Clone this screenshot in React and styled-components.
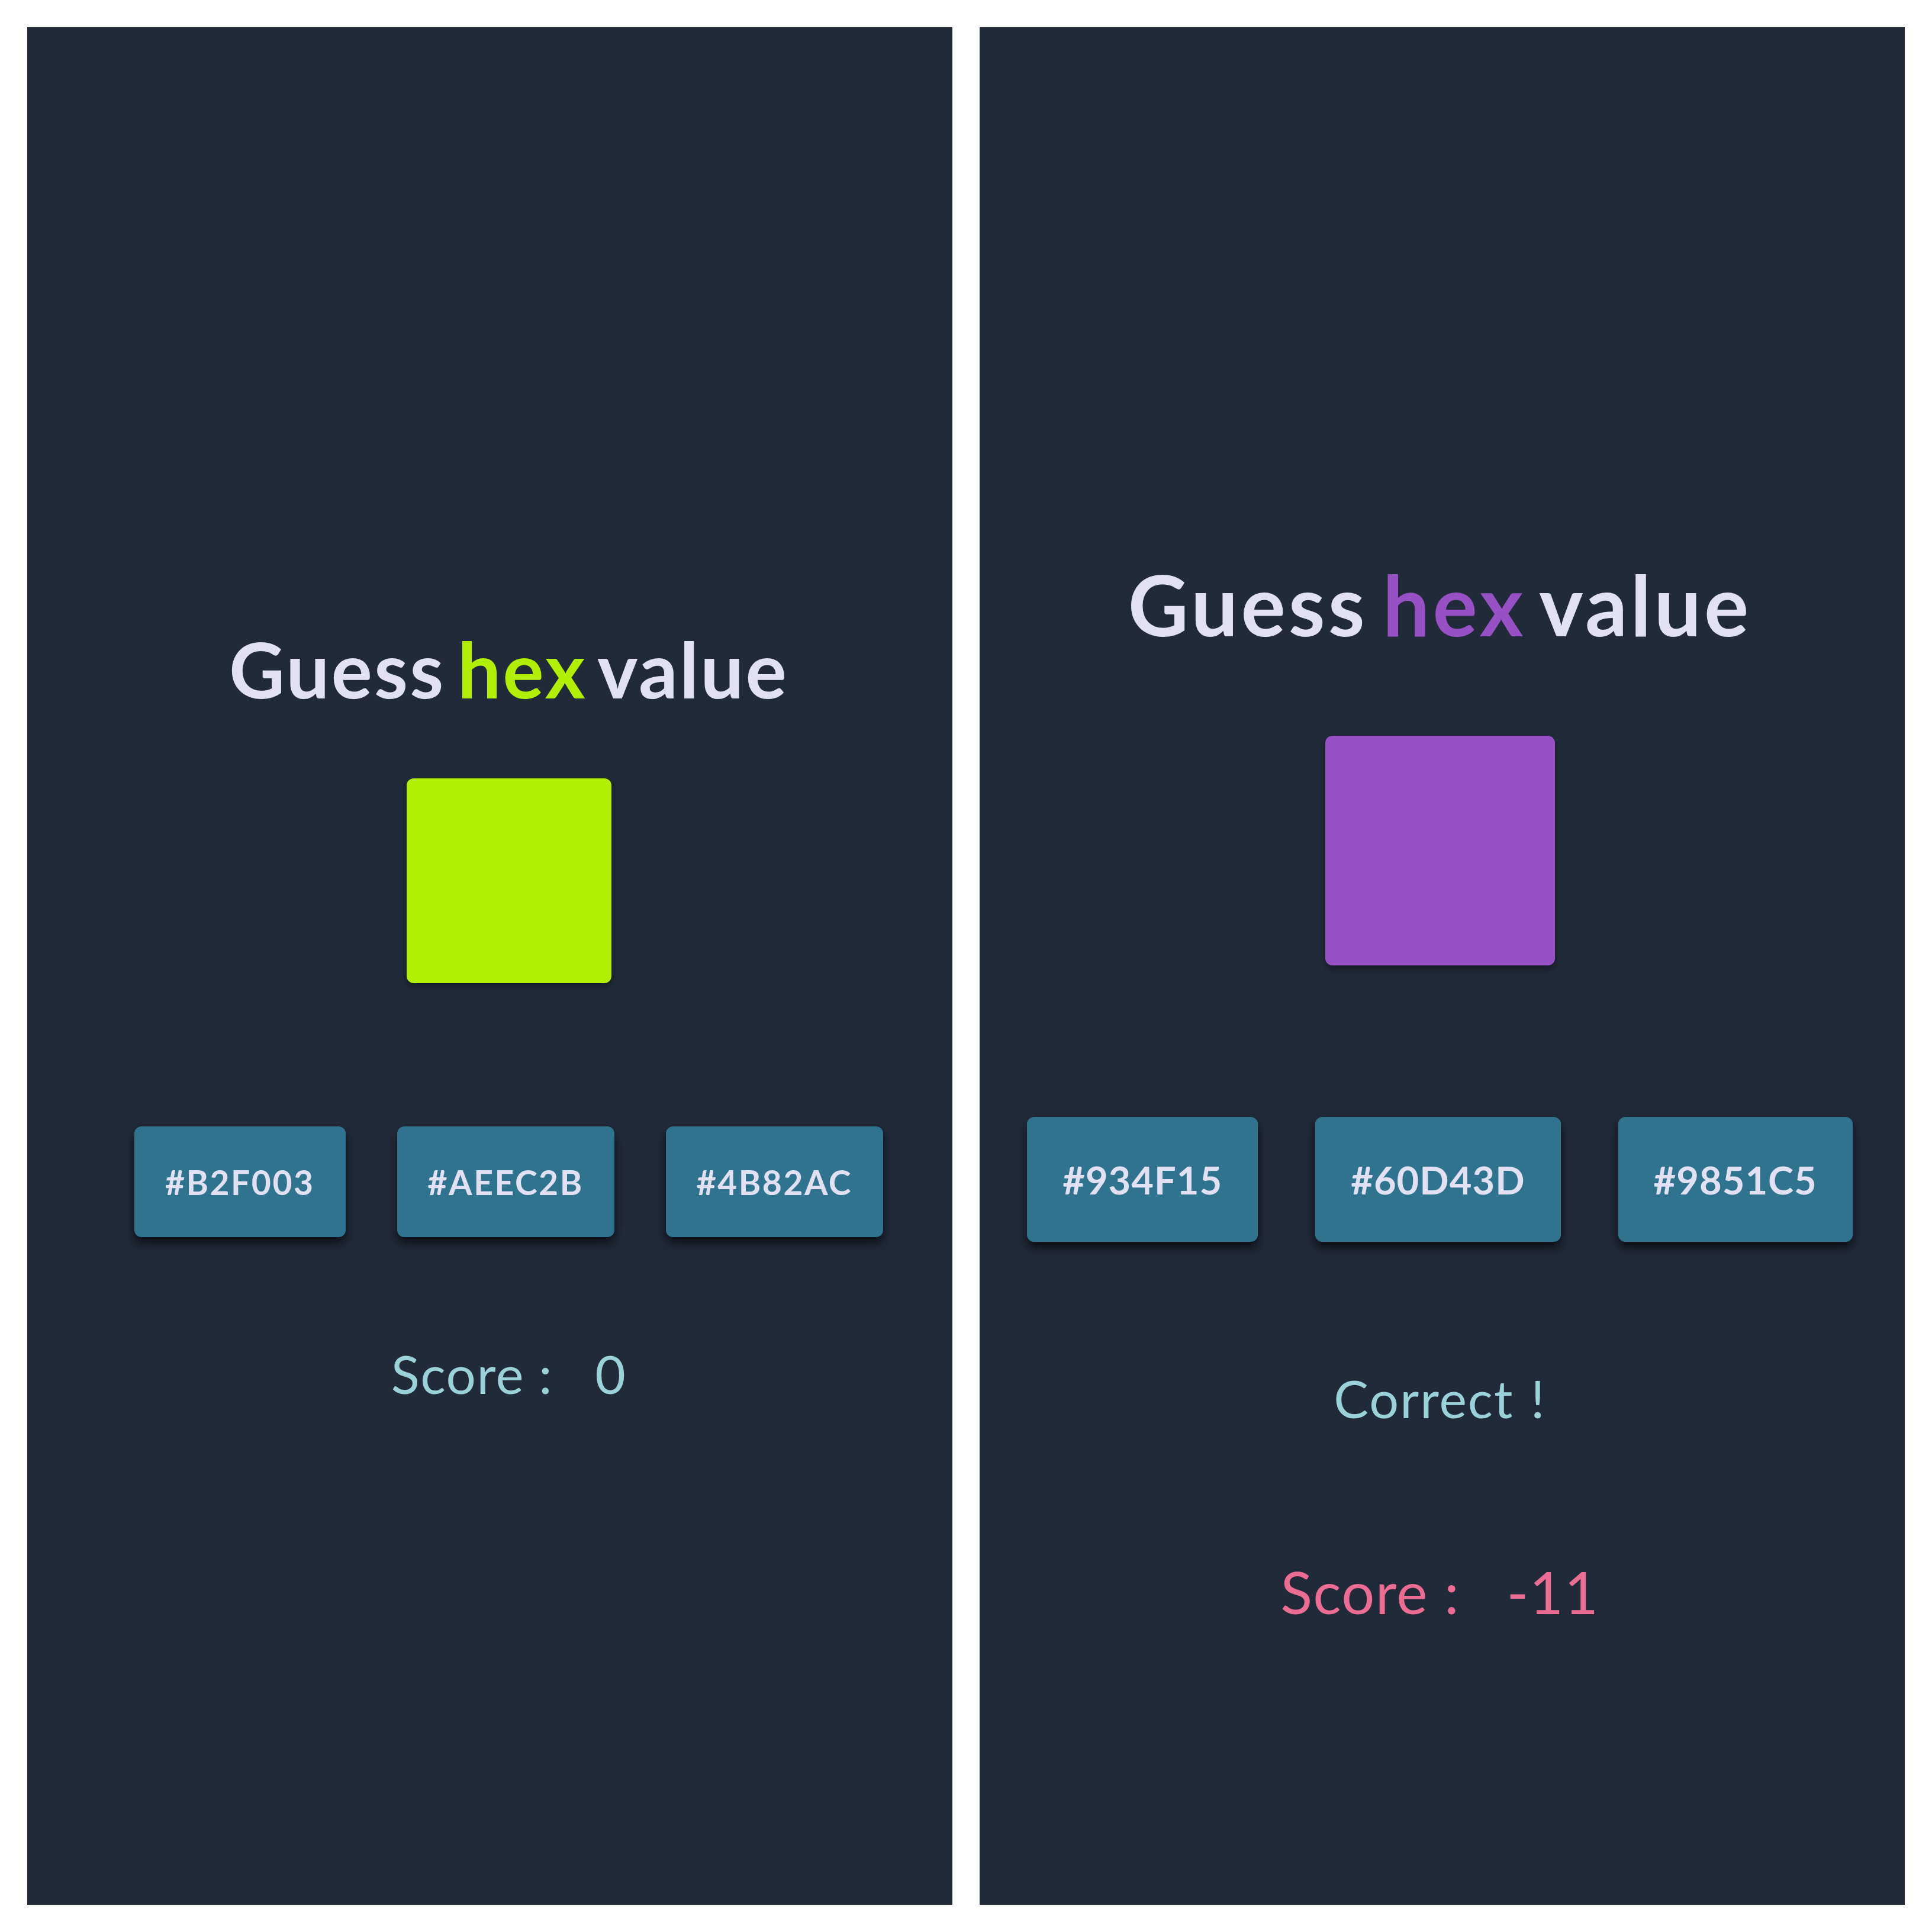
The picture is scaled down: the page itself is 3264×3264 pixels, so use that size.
import React from 'react';
import styled, { createGlobalStyle } from 'styled-components';

const GlobalStyle = createGlobalStyle`
    html, body {
        margin: 0;
        padding: 0;
        background: #ffffff;
    }
    * {
        box-sizing: border-box;
    }
`

const Page = styled.div`
    display: flex;
    gap: 46px;
    padding: 46px;
    width: 3264px;
    height: 3264px;
    background: #ffffff;
    font-family: Lato, "Noto Sans", sans-serif;
`

const Screen = styled.div`
    width: 1563px;
    height: 3172px;
    background-color: #212a39;
    display: flex;
    flex-direction: column;
    align-items: center;
    padding-top: ${p => p.$top}px;
    padding-left: ${p => p.$shift > 0 ? p.$shift * 2 : 0}px;
    padding-right: ${p => p.$shift < 0 ? -p.$shift * 2 : 0}px;
`

const Title = styled.h1`
    margin: 0;
    font-size: ${p => p.$size}px;
    line-height: 1;
    font-weight: 700;
    letter-spacing: ${p => p.$track}px;
    word-spacing: -14px;
    color: #e2e0f3;
    white-space: nowrap;
    span {
        color: ${p => p.$accent};
    }
`

const Swatch = styled.div`
    width: ${p => p.$size}px;
    height: ${p => p.$size}px;
    margin-top: ${p => p.$gap}px;
    background-color: ${p => p.$color};
    border-radius: 12px;
    box-shadow: 0 6px 12px rgba(0, 0, 0, 0.35);
`

const Options = styled.div`
    display: flex;
    gap: ${p => p.$gap}px;
    margin-top: ${p => p.$top}px;
`

const Option = styled.button`
    height: ${p => p.$height}px;
    padding: 0 ${p => p.$pad}px;
    border: none;
    border-radius: 12px;
    background-color: #2f738e;
    color: #e2e0f3;
    font-family: Lato, "Noto Sans", sans-serif;
    font-size: ${p => p.$size}px;
    font-weight: 700;
    letter-spacing: ${p => p.$track}px;
    box-shadow: 0 10px 18px rgba(0, 0, 0, 0.65);
    cursor: pointer;
`

const Message = styled.p`
    margin: ${p => p.$top}px 0 0;
    font-size: ${p => p.$size}px;
    line-height: 1;
    letter-spacing: 2px;
    color: #9bd1d9;
    white-space: nowrap;
    span {
        margin-left: 4px;
    }
`

const Score = styled.p`
    margin: ${p => p.$top}px 0 0;
    font-size: ${p => p.$size}px;
    line-height: 1;
    letter-spacing: 1.5px;
    color: ${p => p.$bad ? '#ec6d93' : '#9bd1d9'};
    white-space: nowrap;
    span {
        margin-left: ${p => p.$size * 0.8}px;
    }
`

const screens = [
    {
        top: 1019, shift: 32, titleSize: 130, titleTrack: 3, accent: '#b2f003',
        swatch: '#b2f003', swatchSize: 346, swatchGap: 120,
        options: ['#B2F003', '#AEEC2B', '#4B82AC'],
        optTop: 242, optGap: 87, optHeight: 187, optPad: 52, optSize: 57, optTrack: 2.5,
        scoreTop: 186, scoreSize: 89, score: 0,
    },
    {
        top: 904, shift: -4, titleSize: 141, titleTrack: 5, accent: '#9851c5',
        swatch: '#9851c5', swatchSize: 388, swatchGap: 152,
        options: ['#934F15', '#60D43D', '#9851C5'],
        optTop: 256, optGap: 97, optHeight: 211, optPad: 60, optSize: 65, optTrack: 1,
        message: 'Correct', messageTop: 220, messageSize: 88,
        scoreTop: 233, scoreSize: 99, score: -11,
    },
]

const GameScreen = ({ s }) => {
    return (
        <Screen $top={s.top} $shift={s.shift}>
            <Title $size={s.titleSize} $track={s.titleTrack} $accent={s.accent}>
                Guess <span>hex</span> value
            </Title>
            <Swatch $size={s.swatchSize} $gap={s.swatchGap} $color={s.swatch} />
            <Options $top={s.optTop} $gap={s.optGap}>
                {s.options.map(hex => (
                    <Option key={hex} $height={s.optHeight} $pad={s.optPad} $size={s.optSize} $track={s.optTrack}>{hex}</Option>
                ))}
            </Options>
            {s.message && <Message $top={s.messageTop} $size={s.messageSize}>{s.message} <span>!</span></Message>}
            <Score $top={s.scoreTop} $size={s.scoreSize} $bad={s.score < 0}>
                Score :<span>{s.score}</span>
            </Score>
        </Screen>
    );
}

const App = () => {
    return (
        <>
            <GlobalStyle />
            <Page>
                {screens.map((s, i) => <GameScreen key={i} s={s} />)}
            </Page>
        </>
    );
}

export default App;
